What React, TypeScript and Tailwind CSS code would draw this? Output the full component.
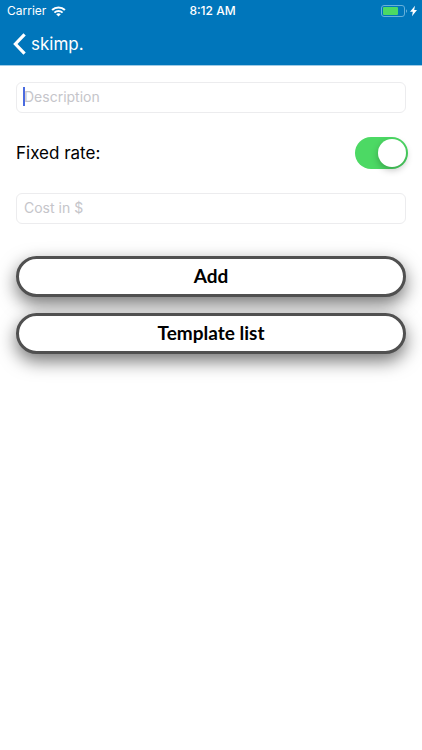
import { useState } from "react";

function WifiIcon() {
  return (
    <svg viewBox="0 0 15 11" className="h-[11px] w-[15px]" fill="none" aria-hidden="true">
      <path d="M1.1 4.1a9.2 9.2 0 0 1 12.8 0" stroke="white" strokeWidth="2.1" />
      <path d="M3.4 6.6a5.9 5.9 0 0 1 8.2 0" stroke="white" strokeWidth="1.9" />
      <path d="M7.5 10.4 5.2 8.3a3.3 3.3 0 0 1 4.6 0Z" fill="white" />
    </svg>
  );
}

function BatteryIcon() {
  return (
    <svg viewBox="0 0 37 12" className="h-3 w-[37px]" fill="none" aria-hidden="true">
      <rect x="0.5" y="0.5" width="23" height="11" rx="2.5" stroke="#66b0da" />
      <rect x="2" y="2" width="15" height="8" rx="1" fill="#4cd964" />
      <path d="M25 4.2c1.4.4 1.4 3.2 0 3.6Z" fill="#66b0da" />
      <path d="M34 .8 29 6.8h2.8L31 11.2l5-6.2h-2.8Z" fill="white" />
    </svg>
  );
}

function StatusBar() {
  return (
    <div className="grid h-[22px] grid-cols-3 items-center pr-1 pl-[7px] text-[12px] leading-4">
      <div className="flex items-center gap-[5px]">
        <span>Carrier</span>
        <WifiIcon />
      </div>
      <span className="text-center font-medium">8:12 AM</span>
      <div className="flex justify-end">
        <BatteryIcon />
      </div>
    </div>
  );
}

function Field({ label, active = false }: { label: string; active?: boolean }) {
  return (
    <div className="relative">
      <input
        type="text"
        aria-label={label}
        placeholder={label}
        className="block h-[31px] w-full rounded-md border border-[#ececee] bg-white px-[7px] pb-0.5 text-[14px] text-black outline-none placeholder:text-[#c5c5ca]"
      />
      {active && <span className="absolute top-[5px] left-[7px] h-[19px] w-0.5 bg-[#4a6be0]" />}
    </div>
  );
}

function PillButton({ children }: { children: string }) {
  return (
    <button
      type="button"
      className="h-[41px] w-full rounded-full border-3 border-[#505050] bg-white pb-0.5 font-[Lato,sans-serif] text-[19px] leading-6 font-bold text-black shadow-[0_7px_18px_rgba(0,0,0,0.55)]"
    >
      {children}
    </button>
  );
}

export default function App() {
  const [fixedRate, setFixedRate] = useState(true);

  return (
    <div className="min-h-screen bg-white font-[Inter,sans-serif] text-black">
      <header className="border-b border-[#9fcbe6] bg-[#0076bb] text-white">
        <StatusBar />
        <nav className="flex h-[43px] items-center px-3">
          <a href="#skimp" className="flex items-center gap-[5px] text-[17px] leading-6">
            <svg viewBox="0 0 14 22" className="h-[22px] w-3.5" fill="none" aria-hidden="true">
              <path d="M12.6 1.4 3.4 11l9.2 9.6" stroke="white" strokeWidth="3.2" />
            </svg>
            skimp.
          </a>
        </nav>
      </header>

      <main className="px-4 pt-4">
        <Field label="Description" active />

        <div className="-mr-0.5 flex h-20 items-center justify-between">
          <label htmlFor="fixed-rate" className="text-[17px] leading-6">
            Fixed rate:
          </label>
          <input
            id="fixed-rate"
            type="checkbox"
            role="switch"
            checked={fixedRate}
            onChange={(e) => setFixedRate(e.target.checked)}
            className="flex h-8 w-[53px] appearance-none items-center rounded-full bg-[#e5e5ea] px-0.5 before:size-7 before:rounded-full before:bg-white before:shadow-[0_3px_7px_rgba(0,0,0,0.25)] checked:justify-end checked:bg-[#4cd964]"
          />
        </div>

        <Field label="Cost in $" />

        <div className="mt-8 flex flex-col gap-4">
          <PillButton>Add</PillButton>
          <PillButton>Template list</PillButton>
        </div>
      </main>
    </div>
  );
}
